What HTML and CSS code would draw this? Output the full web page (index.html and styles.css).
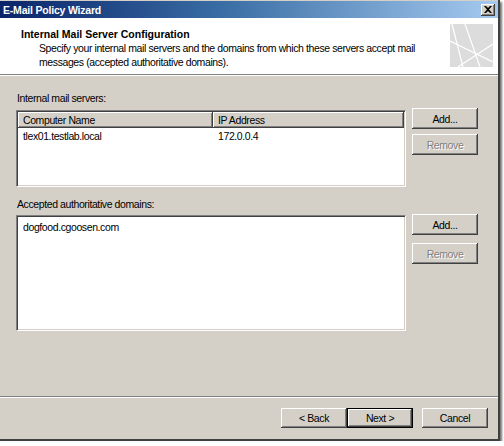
FILE: index.html
```html
<!DOCTYPE html>
<html>
<head>
<meta charset="utf-8">
<link rel="stylesheet" href="styles.css">
</head>
<body>
<div class="window">
  <div class="titlebar">
    <span class="title">E-Mail Policy Wizard</span>
    <span class="close"><svg width="8" height="7" viewBox="0 0 8 7"><path d="M0 0h2l2 2 2-2h2L5 3.5 8 7H6L4 5 2 7H0l3-3.5z" fill="#000"/></svg></span>
  </div>
  <div class="header">
    <div class="htext">
      <div class="htitle">Internal Mail Server Configuration</div>
      <div class="hdesc">Specify your internal mail servers and the domains from which these servers accept mail messages (accepted authoritative domains).</div>
    </div>
    <svg class="hlogo" width="43" height="43" viewBox="0 0 43 43">
      <rect width="43" height="43" fill="#dcdcdc"/>
      <g stroke="#fff" stroke-width="1.2" fill="none">
        <path d="M2 0 L13 43"/>
        <path d="M15 0 L30 43"/>
        <path d="M0 17 L43 38"/>
        <path d="M8 43 L43 20"/>
      </g>
    </svg>
  </div>
  <div class="content">
    <div class="label">Internal mail servers:</div>
    <div class="row">
      <div class="list list1">
        <div class="lhead">
          <div class="col c1">Computer Name</div>
          <div class="col c2">IP Address</div>
        </div>
        <div class="lrow">
          <div class="cell c1">tlex01.testlab.local</div>
          <div class="cell c2">172.0.0.4</div>
        </div>
      </div>
      <div class="side">
        <div class="btn">Add...</div>
        <div class="btn disabled">Remove</div>
      </div>
    </div>
    <div class="label label2">Accepted authoritative domains:</div>
    <div class="row">
      <div class="list list2">
        <div class="lrow dom"><div class="cell">dogfood.cgoosen.com</div></div>
      </div>
      <div class="side side2">
        <div class="btn">Add...</div>
        <div class="btn disabled">Remove</div>
      </div>
    </div>
  </div>
  <div class="footer">
    <div class="btn">&lt; Back</div>
    <div class="btn default">Next &gt;</div>
    <div class="btn cancel">Cancel</div>
  </div>
</div>
</body>
</html>
```
FILE: styles.css
```css
html, body {
  margin: 0;
  padding: 0;
  background: #fff;
}
body {
  font-family: "Liberation Sans", Arial, sans-serif;
  font-size: 10.5px;
  letter-spacing: -0.4px;
  color: #000;
}
.window {
  width: 500px;
  height: 441px;
  background: #d4d0c8;
  box-sizing: border-box;
  border-right: 2px solid #404040;
  border-bottom: 2px solid #404040;
  box-shadow: 2px 2px 2px rgba(0,0,0,0.55);
  display: flex;
  flex-direction: column;
}
.titlebar {
  height: 18px;
  background: linear-gradient(to right, #0a246a 0%, #3a6ea5 45%, #a6caf0 100%);
  display: flex;
  align-items: center;
  justify-content: space-between;
  padding: 0 3px 0 3px;
  border-top: 1px solid #d4d0c8;
  box-sizing: border-box;
}
.title {
  color: #fff;
  font-weight: bold;
  letter-spacing: -0.2px;
}
.close {
  width: 14px;
  height: 12px;
  background: #d4d0c8;
  box-shadow: inset -1px -1px #404040, inset 1px 1px #fff, inset -2px -2px #808080;
  display: flex;
  align-items: center;
  justify-content: center;
}
.header {
  height: 57px;
  background: #fff;
  border-bottom: 1px solid #808080;
  box-shadow: 0 1px 0 #fff;
  display: flex;
  justify-content: space-between;
  padding: 6px 5px 0 21px;
  box-sizing: border-box;
}
.htitle {
  font-weight: bold;
  letter-spacing: 0;
  line-height: 14px;
  margin-top: 3px;
}
.hdesc {
  margin-left: 18px;
  width: 385px;
  line-height: 14px;
}
.hlogo {
  display: block;
  flex: none;
}
.content {
  flex: 1;
  padding: 17px 0 0 16px;
}
.label {
  line-height: 13px;
  margin-left: 1px;
  margin-bottom: 5px;
}
.label2 {
  margin-top: 11px;
  margin-bottom: 4px;
}
.row {
  display: flex;
  gap: 6px;
}
.list {
  width: 390px;
  background: #fff;
  box-sizing: border-box;
  border: 1px solid;
  border-color: #808080 #fff #fff #808080;
  box-shadow: inset 1px 1px #404040, inset -1px -1px #d4d0c8;
  padding: 1px;
}
.list1 { height: 77px; }
.list2 { height: 116px; }
.lhead {
  display: flex;
  height: 16px;
}
.col {
  background: #d4d0c8;
  box-shadow: inset -1px -1px #404040, inset 1px 1px #fff, inset -2px -2px #808080;
  line-height: 16px;
  padding-left: 5px;
  box-sizing: border-box;
}
.col.c1 { width: 195px; }
.col.c2 { flex: 1; }
.lrow {
  display: flex;
  line-height: 15px;
  margin-top: 1px;
}
.cell { padding-left: 5px; box-sizing: border-box; }
.cell.c1 { width: 195px; }
.dom { margin-top: 3px; }
.side {
  display: flex;
  flex-direction: column;
  gap: 5px;
  margin-top: -2px;
}
.side2 { margin-top: -1px; gap: 8px; }
.btn {
  width: 66px;
  height: 21px;
  box-sizing: border-box;
  background: #d4d0c8;
  box-shadow: inset -1px -1px #404040, inset 1px 1px #fff, inset -2px -2px #808080, inset 2px 2px #d4d0c8;
  display: flex;
  align-items: center;
  justify-content: center;
}
.btn.disabled {
  color: #808080;
  text-shadow: 1px 1px 0 #fff;
}
.footer {
  height: 43px;
  border-top: 1px solid #808080;
  box-shadow: inset 0 1px #fff;
  display: flex;
  justify-content: flex-end;
  padding: 11px 10px 0 0;
  box-sizing: border-box;
}
.footer .btn { height: 20px; }
.btn.default {
  border: 1px solid #000;
  box-shadow: inset -1px -1px #404040, inset 1px 1px #fff, inset -2px -2px #808080;
}
.btn.cancel { margin-left: 9px; }
```
